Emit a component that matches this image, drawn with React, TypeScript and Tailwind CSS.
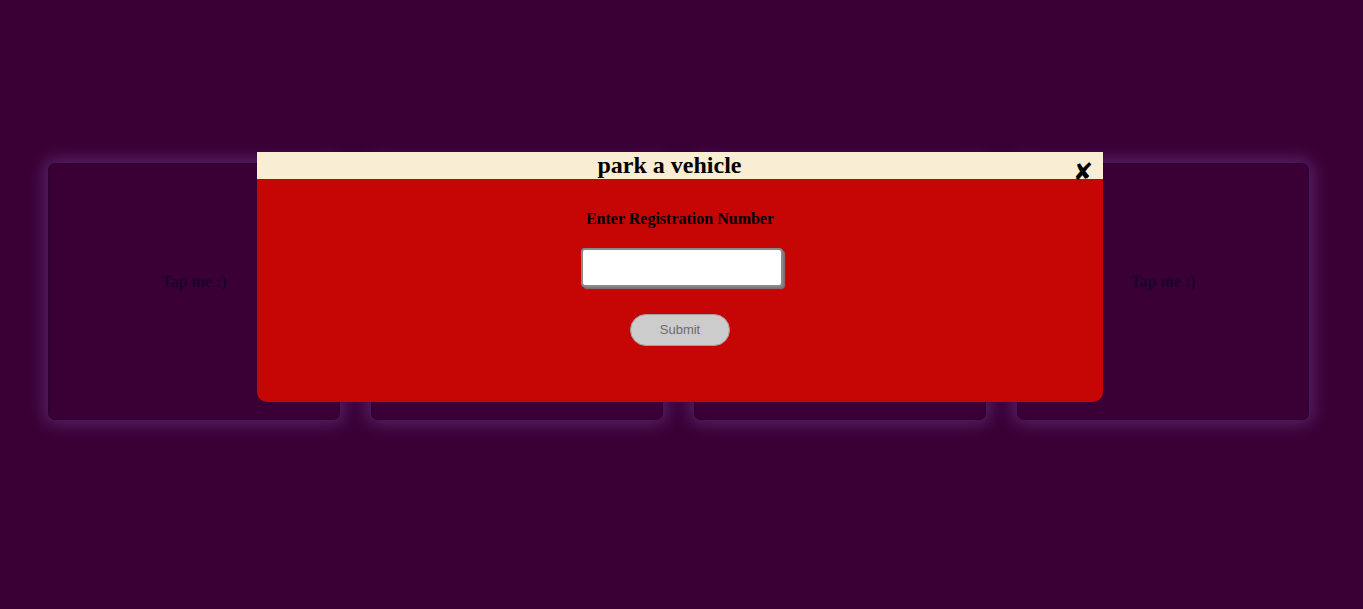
import React from "react";

const serif = { fontFamily: '"Liberation Serif", "Times New Roman", serif' };

function Card() {
  return (
    <div className="w-[292px] h-[257px] shrink-0 rounded-[7px] border border-[#2b0030] bg-[#3a0036] shadow-[0_0_16px_5px_rgba(90,40,110,0.8)] flex items-center justify-center pb-[19px]">
      <span className="text-[16px] font-bold text-[#1c002c]" style={serif}>
        Tap me :)
      </span>
    </div>
  );
}

export default function App() {
  return (
    <div className="relative w-[1363px] h-[609px] bg-[#3a0036] overflow-hidden" style={serif}>
      <div className="flex pl-[48px] pt-[163px] gap-[31px]">
        <Card />
        <Card />
        <Card />
        <Card />
      </div>

      <div className="absolute left-[257px] top-[152px] w-[846px] h-[250px] flex flex-col">
        <div className="relative h-[27px] bg-[#f9edd4] shrink-0 pr-[21px]">
          <div className="text-center text-[24px] font-bold leading-[27px] text-black">
            park a vehicle
          </div>
          <div
            className="absolute right-[10px] top-[8px] text-[24px] leading-none font-bold text-black z-10"
            style={{ fontFamily: '"DejaVu Sans", sans-serif' }}
          >
            ✘
          </div>
        </div>
        <div className="flex-1 bg-[#c60505] rounded-b-[10px] flex flex-col items-center pt-[31px]">
          <div className="text-[16px] font-bold leading-[18px] text-black">
            Enter Registration Number
          </div>
          <input
            type="text"
            className="mt-[20px] ml-[3px] w-[202px] h-[39px] bg-white border-2 border-[#8a8a8a] rounded-[4px] shadow-[2px_2px_1px_#7a7a7a] outline-none"
          />
          <button
            className="mt-[27px] w-[100px] h-[32px] rounded-full bg-[#cccccc] border border-[#a0a0a0] text-[13px] text-[#6b6b6b]"
            style={{ fontFamily: '"Liberation Sans", Arial, sans-serif' }}
          >
            Submit
          </button>
        </div>
      </div>
    </div>
  );
}
